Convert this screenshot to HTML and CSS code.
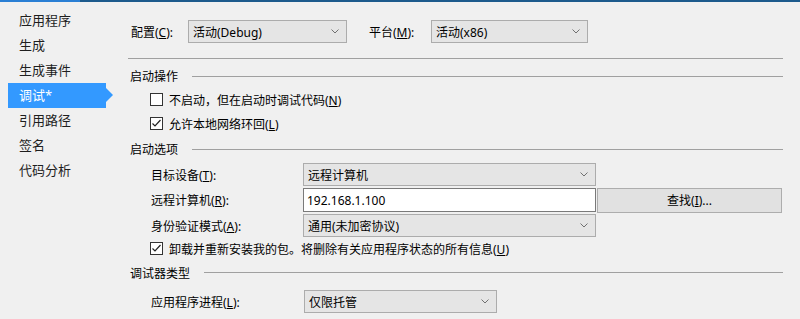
FILE: index.html
```html
<!DOCTYPE html>
<html lang="zh-CN">
<head>
  <meta charset="UTF-8" />
  <title>调试</title>
  <link rel="stylesheet" href="styles.css">
</head>
<body>
  <div class="topbar"></div>
  <div class="page">
    <nav class="side">
      <div class="nav-item">应用程序</div>
      <div class="nav-item">生成</div>
      <div class="nav-item">生成事件</div>
      <div class="nav-item active">调试*</div>
      <div class="nav-item">引用路径</div>
      <div class="nav-item">签名</div>
      <div class="nav-item">代码分析</div>
    </nav>

    <main class="content">
      <div class="config-row">
        <span class="config-label">配置(<u>C</u>):</span>
        <div class="combo combo-config">
          <span>活动(Debug)</span>
          <svg class="chev" width="8" height="5" viewBox="0 0 8 5"><polyline points="0.5,0.5 4,4 7.5,0.5" /></svg>
        </div>
        <span class="config-label platform">平台(<u>M</u>):</span>
        <div class="combo combo-platform">
          <span>活动(x86)</span>
          <svg class="chev" width="8" height="5" viewBox="0 0 8 5"><polyline points="0.5,0.5 4,4 7.5,0.5" /></svg>
        </div>
      </div>

      <div class="rule"></div>

      <!-- 启动操作 -->
      <div class="group-title t1"><span>启动操作</span></div>
      <div class="check-row c1">
        <span class="box"></span>
        <span>不启动，但在启动时调试代码(<u>N</u>)</span>
      </div>
      <div class="check-row c2">
        <span class="box">
          <svg width="11" height="11" viewBox="0 0 11 11"><polyline points="1.5,5.5 4,8 9.5,2" /></svg>
        </span>
        <span>允许本地网络环回(<u>L</u>)</span>
      </div>

      <!-- 启动选项 -->
      <div class="group-title t2"><span>启动选项</span></div>
      <div class="field-row r1">
        <span>目标设备(<u>T</u>):</span>
        <div class="combo combo-wide">
          <span>远程计算机</span>
          <svg class="chev" width="8" height="5" viewBox="0 0 8 5"><polyline points="0.5,0.5 4,4 7.5,0.5" /></svg>
        </div>
      </div>
      <div class="field-row r2">
        <span>远程计算机(<u>R</u>):</span>
        <div class="text-input">192.168.1.100</div>
        <div class="button">查找(<u>I</u>)...</div>
      </div>
      <div class="field-row r3">
        <span>身份验证模式(<u>A</u>):</span>
        <div class="combo combo-wide">
          <span>通用(未加密协议)</span>
          <svg class="chev" width="8" height="5" viewBox="0 0 8 5"><polyline points="0.5,0.5 4,4 7.5,0.5" /></svg>
        </div>
      </div>
      <div class="check-row c3">
        <span class="box">
          <svg width="11" height="11" viewBox="0 0 11 11"><polyline points="1.5,5.5 4,8 9.5,2" /></svg>
        </span>
        <span>卸载并重新安装我的包。将删除有关应用程序状态的所有信息(<u>U</u>)</span>
      </div>

      <!-- 调试器类型 -->
      <div class="group-title t3"><span>调试器类型</span></div>
      <div class="field-row r4">
        <span>应用程序进程(<u>L</u>):</span>
        <div class="combo combo-short">
          <span>仅限托管</span>
          <svg class="chev" width="8" height="5" viewBox="0 0 8 5"><polyline points="0.5,0.5 4,4 7.5,0.5" /></svg>
        </div>
      </div>
    </main>
  </div>
</body>
</html>
```

FILE: styles.css
```css
body {
  margin: 0;
  width: 800px;
  height: 319px;
  overflow: hidden;
  background: #f0f0f0;
  color: #000;
  font-family: "Noto Sans", "Noto Sans CJK SC", sans-serif;
  font-size: 12px;
}

u {
  text-decoration: underline;
  text-underline-offset: 1px;
}

.topbar {
  height: 2px;
  background: linear-gradient(to right, #2a7fd4 0, #2a7fd4 80px, #1c5a8c 80px);
}

.page {
  display: flex;
}

/* left nav */
.side {
  width: 128px;
  flex-shrink: 0;
  padding-top: 6px;
}

.nav-item {
  position: relative;
  height: 25px;
  line-height: 25px;
  margin-left: 8px;
  width: 98px;
  padding-left: 11px;
  box-sizing: border-box;
  font-size: 13px;
  color: #1e1e1e;
}

.nav-item.active {
  background: #3399ff;
  color: #fff;
}

.nav-item.active::after {
  content: "";
  position: absolute;
  right: -7px;
  top: 5px;
  border-left: 7px solid #3399ff;
  border-top: 7px solid transparent;
  border-bottom: 7px solid transparent;
}

/* right content */
.content {
  flex: 1;
  padding-right: 17px;
}

.config-row {
  display: flex;
  align-items: center;
  height: 23px;
  margin-top: 18px;
  padding-left: 3px;
}

.config-label {
  width: 57px;
}

.config-label.platform {
  width: 62px;
  margin-left: 22px;
}

.combo {
  height: 23px;
  box-sizing: border-box;
  border: 1px solid #acacac;
  background: #e5e5e5;
  display: flex;
  align-items: center;
  justify-content: space-between;
  padding: 0 7px 0 4px;
}

.combo-config { width: 159px; }
.combo-platform { width: 157px; }
.combo-wide { width: 293px; }
.combo-short { width: 193px; }

.chev polyline {
  fill: none;
  stroke: #707070;
  stroke-width: 1;
}

.rule {
  height: 1px;
  background: #a0a0a0;
  margin-top: 15px;
}

.group-title {
  display: flex;
  align-items: center;
  gap: 14px;
  padding-left: 2px;
}

.group-title::after {
  content: "";
  flex: 1;
  height: 1px;
  background: #a0a0a0;
}

.t1 { height: 24px; margin-top: 5px; }
.t2 { height: 26px; }
.t3 { height: 27px; }

.check-row {
  display: flex;
  align-items: center;
  gap: 6px;
  padding-left: 22px;
}

.c1 { height: 23px; }
.c2 { height: 25px; }
.c3 { height: 21px; }

.box {
  width: 13px;
  height: 13px;
  box-sizing: border-box;
  border: 1px solid #333;
  background: #fff;
  display: flex;
}

.box polyline {
  fill: none;
  stroke: #222;
  stroke-width: 1.2;
}

.field-row {
  display: grid;
  grid-template-columns: 152px auto auto;
  justify-content: start;
  align-items: center;
  padding-left: 23px;
}

.r1 { height: 25px; }
.r2 { height: 26px; }
.r3 { height: 25px; }
.r4 { height: 31px; }

.r4 .combo { margin-left: 1px; }

.text-input {
  width: 293px;
  height: 24px;
  box-sizing: border-box;
  border: 1px solid #7a7a7a;
  background: #fff;
  padding-left: 3px;
  display: flex;
  align-items: center;
}

.button {
  width: 185px;
  height: 25px;
  margin-left: 1px;
  box-sizing: border-box;
  border: 1px solid #adadad;
  background: #e1e1e1;
  display: flex;
  align-items: center;
  justify-content: center;
}
```
